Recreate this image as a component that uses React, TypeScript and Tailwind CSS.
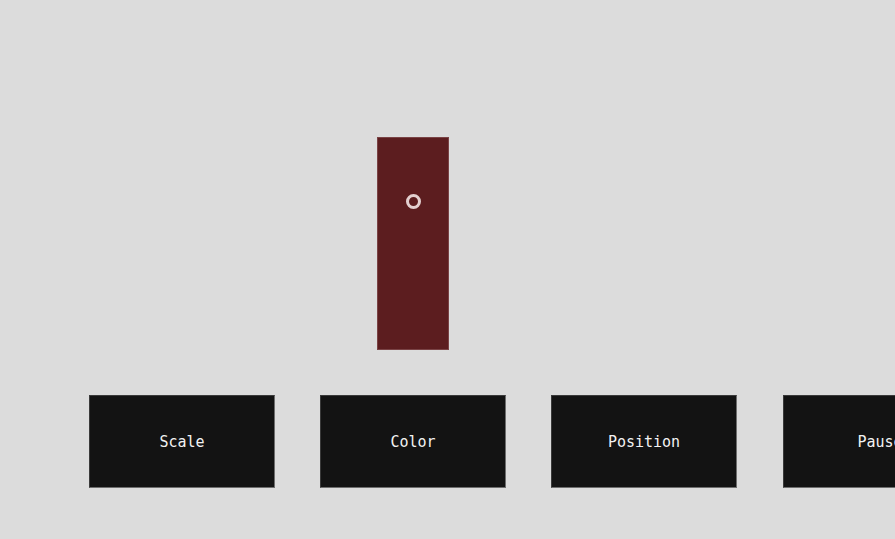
export default function App() {
  const buttons = ['Scale', 'Color', 'Position', 'Pause']
  return (
    <div className="w-[895px] h-[539px] overflow-hidden bg-[#dcdcdc] font-['DejaVu_Sans_Mono',monospace]">
      <div className="pt-[137px] pl-[377px]">
        {/* animated box */}
        <div className="w-[72px] h-[213px] bg-[#5c1d1f] border border-[#7a4345] flex justify-center pt-[56px]">
          <div className="w-[15px] h-[15px] rounded-full border-[3px] border-[#e3cfcf]" />
        </div>
      </div>
      <div className="mt-[45px] pl-[89px] flex gap-[45px]">
        {buttons.map((b, i) => (
          <button
            key={b}
            className={
              'w-[186px] h-[93px] shrink-0 bg-[#131313] text-[#f2f2f2] text-[15px] border border-[#6e6e6e] border-t-[#3a3a3a] border-l-[#3a3a3a] flex items-center justify-center pt-[1px] ' +
              (i === 3 ? 'ml-[1px] pl-[8px]' : '')
            }
          >
            {b}
          </button>
        ))}
      </div>
    </div>
  )
}
